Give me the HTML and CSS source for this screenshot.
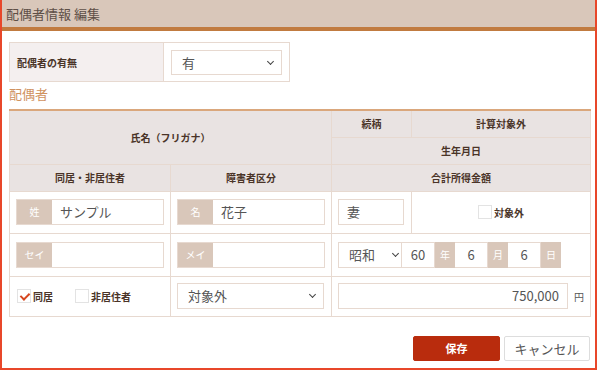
FILE: index.html
```html
<!DOCTYPE html>
<html lang="ja">
<head>
    <meta charset="UTF-8">
    <title>配偶者情報 編集</title>
    <link rel="stylesheet" href="styles.css">
</head>
<body>
    <div class="page">
        <div class="head">配偶者情報 編集</div>
        <div class="main">
            <table class="tb1">
                <tr>
                    <th>配偶者の有無</th>
                    <td><div class="sel sel1">有<span class="arr"></span></div></td>
                </tr>
            </table>
            <h2 class="title">配偶者</h2>
            <table class="tb2">
                <colgroup>
                    <col class="c1"><col class="c2"><col class="c3"><col class="c4">
                </colgroup>
                <tr class="hr">
                    <th colspan="2" rowspan="2">氏名（フリガナ）</th>
                    <th>続柄</th>
                    <th>計算対象外</th>
                </tr>
                <tr class="hr">
                    <th colspan="2">生年月日</th>
                </tr>
                <tr class="hr">
                    <th>同居・非居住者</th>
                    <th>障害者区分</th>
                    <th colspan="2">合計所得金額</th>
                </tr>
                <tr class="r4">
                    <td><div class="inp"><span class="lab">姓</span><span class="val">サンプル</span></div></td>
                    <td><div class="inp"><span class="lab">名</span><span class="val">花子</span></div></td>
                    <td><div class="box_in">妻</div></td>
                    <td class="center"><label class="chk"><span class="cb"></span>対象外</label></td>
                </tr>
                <tr class="r5">
                    <td><div class="inp"><span class="lab">セイ</span><span class="val"></span></div></td>
                    <td><div class="inp"><span class="lab">メイ</span><span class="val"></span></div></td>
                    <td colspan="2">
                        <div class="date">
                            <div class="sel sel_era">昭和<span class="arr"></span></div>
                            <div class="num n1">60</div><span class="unit">年</span>
                            <div class="num">6</div><span class="unit">月</span>
                            <div class="num">6</div><span class="unit">日</span>
                        </div>
                    </td>
                </tr>
                <tr class="r6">
                    <td>
                        <div class="chks">
                            <label class="chk"><span class="cb on"></span>同居</label>
                            <label class="chk"><span class="cb"></span>非居住者</label>
                        </div>
                    </td>
                    <td><div class="sel sel2">対象外<span class="arr"></span></div></td>
                    <td colspan="2">
                        <div class="money"><div class="amount">750,000</div><span class="yen">円</span></div>
                    </td>
                </tr>
            </table>
            <div class="btns">
                <span class="btn save">保存</span>
                <span class="btn cancel">キャンセル</span>
            </div>
        </div>
    </div>
</body>
</html>
```

FILE: styles.css
```css
*{
    margin: 0;
    padding: 0;
    box-sizing: border-box;
}
body{
    font-family: "Noto Sans CJK JP", "Noto Sans", sans-serif;
    color: #555;
    background: #fff;
}
.page{
    width: 597px;
    height: 370px;
    border: 2px solid #e8472a;
    border-top: none;
    overflow: hidden;
}
.head{
    margin-left: -2px;
    height: 31px;
    background: #d9c7ba;
    border-bottom: 4px solid #c17b40;
    font-size: 13px;
    line-height: 27px;
    padding-left: 6px;
    color: #5e4f47;
}
.main{
    padding: 11px 5px 0 7px;
}
table{
    border-collapse: collapse;
}
.tb1{
    width: 281px;
    height: 40px;
}
.tb1 th, .tb1 td{
    border: 1px solid #e7d9d0;
}
.tb1 th{
    width: 154px;
    background: #f4efef;
    font-size: 10px;
    text-align: left;
    padding-left: 7px;
    color: #4a3428;
}
.tb1 td{
    padding: 0 7px;
}
.sel{
    position: relative;
    height: 25px;
    border: 1px solid #e7d9d0;
    background: #fff;
    font-size: 13px;
    line-height: 23px;
    padding-left: 10px;
    color: #555;
}
.arr{
    position: absolute;
    right: 8px;
    top: 8px;
    width: 5px;
    height: 5px;
    border-right: 1.5px solid #444;
    border-bottom: 1.5px solid #444;
    transform: rotate(45deg);
}
.title{
    font-size: 13px;
    font-weight: normal;
    color: #d0925f;
    line-height: 16px;
    margin: 4px 0 7px;
}
.tb2{
    width: 581px;
    table-layout: fixed;
    border-top: 2px solid #daa77c;
}
.c1, .c2{ width: 161px; }
.c3{ width: 80px; }
.c4{ width: 179px; }
.tb2 th, .tb2 td{
    border: 1px solid #e7d9d0;
}
.tb2 th{
    background: #e9e3e2;
    font-size: 10px;
    color: #4a3428;
    height: 27px;
}
.tb2 td{
    padding: 0 6px;
}
.r4 td{ height: 42px; }
.r5 td{ height: 43px; }
.r6 td{ height: 40px; }
.center{
    text-align: center;
}
.inp{
    display: flex;
    height: 26px;
    border: 1px solid #e7d9d0;
    background: #fff;
}
.lab{
    width: 35px;
    background: #d9c7ba;
    color: #fff;
    font-size: 10px;
    text-align: center;
    line-height: 24px;
}
.val{
    flex: 1;
    font-size: 13px;
    line-height: 24px;
    padding-left: 8px;
}
.box_in{
    width: 66px;
    height: 26px;
    border: 1px solid #e7d9d0;
    font-size: 13px;
    line-height: 24px;
    padding-left: 8px;
}
.chk{
    display: inline-flex;
    align-items: center;
    font-size: 10px;
    font-weight: bold;
    color: #4a3428;
}
.cb{
    position: relative;
    width: 14px;
    height: 14px;
    border: 1px solid #e3e3e3;
    background: #fff;
    margin-right: 2px;
}
.cb.on::after{
    content: "";
    position: absolute;
    left: 4px;
    top: 1px;
    width: 4px;
    height: 7px;
    border-right: 2px solid #d6461f;
    border-bottom: 2px solid #d6461f;
    transform: rotate(45deg);
}
.chks{
    display: flex;
    gap: 22px;
    padding-left: 1px;
}
.date{
    display: flex;
    height: 26px;
}
.sel_era{
    width: 64px;
    height: 26px;
    font-size: 13px;
    line-height: 24px;
}
.sel_era .arr{
    right: 3px;
}
.num{
    width: 33px;
    border: 1px solid #e7d9d0;
    border-left: none;
    font-size: 13px;
    line-height: 24px;
    text-align: center;
}
.unit{
    width: 20px;
    background: #d9c7ba;
    color: #fff;
    font-size: 10px;
    text-align: center;
    line-height: 26px;
}
.money{
    display: flex;
    align-items: center;
}
.amount{
    width: 233px;
    height: 26px;
    border: 1px solid #e7d9d0;
    font-size: 13px;
    line-height: 24px;
    text-align: right;
    padding-right: 8px;
}
.yen{
    font-size: 10px;
    margin-left: 6px;
}
.sel2{
    width: 147px;
    height: 26px;
    font-size: 13px;
    line-height: 24px;
}
.btns{
    display: flex;
    justify-content: flex-end;
    gap: 4px;
    margin-top: 19px;
    width: 581px;
}
.btn{
    width: 87px;
    height: 25px;
    border-radius: 2px;
    text-align: center;
    line-height: 23px;
    border: 1px solid #ddd;
}
.save{
    background: #b92c0d;
    border-color: #b92c0d;
    color: #fff;
    font-size: 11px;
    font-weight: bold;
}
.cancel{
    width: 86px;
    background: #fff;
    font-size: 13px;
    color: #555;
}
```
